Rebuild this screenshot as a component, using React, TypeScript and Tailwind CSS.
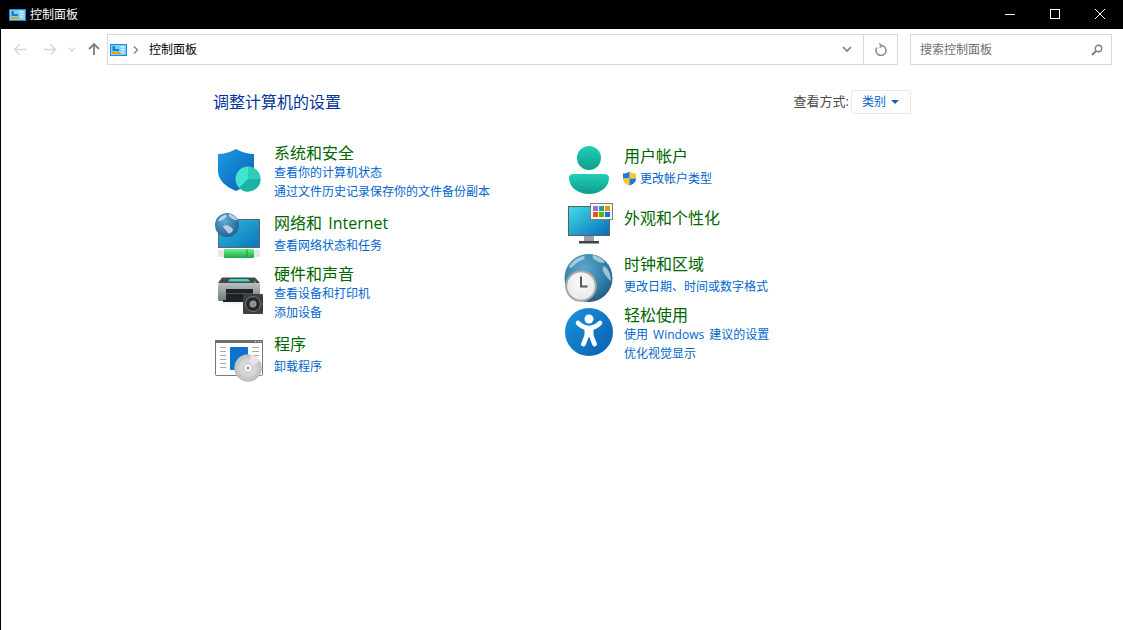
import React from "react";

const CP = () => (
  <svg width="17" height="12" viewBox="0 0 17 12" className="shrink-0">
    <rect x="0.5" y="0.5" width="16" height="11" fill="#7fd0f2" stroke="#1f8ad8" />
    <path d="M2.5 2H5V5H9V7H2.5Z" fill="#1d7fc9" />
    <rect x="2" y="8" width="8" height="2" fill="#f39a18" />
    <path d="M10.5 3h4M11 5.5h3.5M11 8h3" stroke="#ffffff" strokeWidth="1.2" />
  </svg>
);

const ShieldIcon = () => (
  <svg width="50" height="50" viewBox="0 0 50 50" className="shrink-0 mt-[3px]">
    <defs>
      <linearGradient id="sh" x1="0" y1="0" x2="1" y2="1"><stop offset="0" stopColor="#1a9be6" /><stop offset="1" stopColor="#0a5fb0" /></linearGradient>
    </defs>
    <path d="M4 8 C10 8 16 6.5 22 3 C28 6.5 34 8 40 8 L40 25 C40 34 32 41 22 45 C12 41 4 34 4 25 Z" fill="url(#sh)" />
    <circle cx="34" cy="33" r="12.5" fill="#40e4cf" />
    <path d="M34 33 L34 20.5 A12.5 12.5 0 0 1 46.5 33 Z" fill="#30cdb9" />
    <path d="M34 33 L46.5 33 A12.5 12.5 0 0 1 25.1 41.8 Z" fill="#1cb3a2" />
  </svg>
);

const NetworkIcon = () => (
  <svg width="50" height="48" viewBox="0 0 50 48" className="shrink-0 mt-[-2px]">
    <defs>
      <linearGradient id="ns" x1="0" y1="0" x2="1" y2="1"><stop offset="0" stopColor="#2dbcd8" /><stop offset="1" stopColor="#0b74c0" /></linearGradient>
      <linearGradient id="ng" x1="0" y1="0" x2="0" y2="1"><stop offset="0" stopColor="#6cf08a" /><stop offset="1" stopColor="#1ea84a" /></linearGradient>
      <radialGradient id="ng2" cx="0.4" cy="0.35" r="0.75"><stop offset="0" stopColor="#5fa9d2" /><stop offset="1" stopColor="#1a5a8a" /></radialGradient>
    </defs>
    <rect x="4.5" y="8.5" width="41" height="28" fill="url(#ns)" stroke="#5c6670" />
    <rect x="4" y="39" width="42" height="7" fill="#e4e6e8" />
    <rect x="10" y="38" width="30" height="9" rx="1" fill="url(#ng)" />
    <path d="M33 38.5V46.5" stroke="#1c9a44" />
    <circle cx="13" cy="14" r="12" fill="url(#ng2)" />
    <path d="M4 10 C6 6 9 4 12 3.5 C14 5 12 7 10 8 C8 9 6 11 4 10 Z M15 3 C19 3.5 22 6 23.5 9 C21 10 19 8 17 7 C15 6 14 4 15 3 Z M9 15 C12 13 16 15 19 18 C19 21 16 23 14 22 C12 19 10 18 9 15 Z" fill="#dfeaf0" opacity="0.75" />
  </svg>
);

const PrinterIcon = () => (
  <svg width="50" height="40" viewBox="0 0 50 40" className="shrink-0 mt-[13px]">
    <defs>
      <linearGradient id="pr" x1="0" y1="0" x2="0" y2="1"><stop offset="0" stopColor="#b8c0c3" /><stop offset="1" stopColor="#6f777b" /></linearGradient>
    </defs>
    <path d="M8 0.5 H41 L46 6 H4 Z" fill="#44494c" />
    <path d="M16 2 H34 L36 4.5 H14 Z" fill="#45d8c0" />
    <rect x="4" y="6" width="42" height="18" rx="1.5" fill="url(#pr)" />
    <rect x="12" y="12" width="27" height="11" fill="#202326" />
    <rect x="12" y="16" width="27" height="1" fill="#4b5054" />
    <rect x="9" y="23" width="28" height="2" fill="#1f2225" />
    <rect x="9" y="25" width="28" height="2.5" fill="#f4f4f4" />
    <circle cx="41" cy="5" r="0.9" fill="#40d040" />
    <rect x="29" y="17" width="20" height="20" rx="1" fill="#3d3f41" />
    <circle cx="39" cy="27" r="7.5" fill="#25282a" stroke="#7a7d80" />
    <circle cx="39" cy="27" r="3.5" fill="#8d9194" />
  </svg>
);

const ProgramIcon = () => (
  <svg width="50" height="50" viewBox="0 0 50 50" className="shrink-0 mt-px">
    <defs>
      <radialGradient id="cd" cx="0.5" cy="0.5" r="0.6"><stop offset="0" stopColor="#f2f2f2" /><stop offset="0.6" stopColor="#c9cccd" /><stop offset="1" stopColor="#aeb1b3" /></radialGradient>
    </defs>
    <rect x="1.5" y="5.5" width="47" height="35" rx="1" fill="#fdfdfd" stroke="#77797a" />
    <rect x="1" y="5" width="48" height="3" fill="#6d6f70" />
    <path d="M41 6.5h1M43.5 6.5h1M46 6.5h1" stroke="#eee" />
    <path d="M6 12.5h6M6 16.5h6M6 20.5h6M6 24.5h6M6 28.5h6M6 32.5h6M38 12.5h7M38 16.5h7M38 20.5h7" stroke="#a4a6a8" />
    <rect x="16" y="12" width="18" height="23" rx="1" fill="#0a73cf" />
    <circle cx="34" cy="33" r="13.7" fill="url(#cd)" />
    <path d="M34 33 L46 26 A13.7 13.7 0 0 0 37 19.5 Z" fill="#ece2ea" />
    <circle cx="34" cy="33" r="4.5" fill="#f6f6f6" stroke="#b2b4b6" />
    <circle cx="34" cy="33" r="1.5" fill="#9a9c9e" />
  </svg>
);

const PersonIcon = () => (
  <svg width="50" height="49" viewBox="0 0 50 49" className="shrink-0 mt-[-1px]">
    <defs>
      <linearGradient id="pa" x1="0" y1="0" x2="0" y2="1"><stop offset="0" stopColor="#21cfb6" /><stop offset="1" stopColor="#0f9d8c" /></linearGradient>
    </defs>
    <circle cx="25" cy="13" r="12" fill="url(#pa)" />
    <path d="M5 33 Q5 29 10 29 H40 Q45 29 45 33 C45 43 35 49 25 49 C15 49 5 43 5 33 Z" fill="url(#pa)" />
  </svg>
);

const AppearanceIcon = () => (
  <svg width="50" height="44" viewBox="0 0 50 44" className="shrink-0 mt-[-5px]">
    <defs>
      <linearGradient id="ap" x1="0" y1="0" x2="1" y2="1"><stop offset="0" stopColor="#3fe0e8" /><stop offset="1" stopColor="#0a6ab8" /></linearGradient>
    </defs>
    <rect x="4.5" y="3.5" width="41" height="29" fill="url(#ap)" stroke="#55606a" />
    <rect x="20" y="33" width="10" height="5" fill="#9aa2a8" />
    <rect x="15" y="38" width="20" height="2.5" fill="#3f4549" />
    <rect x="26.5" y="0.5" width="22" height="16" fill="#f6f6f6" stroke="#7d7f80" />
    <rect x="29" y="3" width="5" height="5" fill="#9b70d0" />
    <rect x="35" y="3" width="5" height="5" fill="#1fa890" />
    <rect x="41" y="3" width="5" height="5" fill="#f09410" />
    <rect x="29" y="9" width="5" height="5" fill="#e85412" />
    <rect x="35" y="9" width="5" height="5" fill="#62b010" />
    <rect x="41" y="9" width="5" height="5" fill="#0a7ad4" />
  </svg>
);

const ClockIcon = () => (
  <svg width="50" height="50" viewBox="0 0 50 50" className="shrink-0 mt-[-2px]">
    <defs>
      <radialGradient id="gl" cx="0.4" cy="0.3" r="0.85"><stop offset="0" stopColor="#5aa8d0" /><stop offset="0.6" stopColor="#2e7aa4" /><stop offset="1" stopColor="#174f6e" /></radialGradient>
      <radialGradient id="cf" cx="0.5" cy="0.4" r="0.7"><stop offset="0" stopColor="#fbfbfb" /><stop offset="1" stopColor="#e4e4e4" /></radialGradient>
    </defs>
    <circle cx="24.5" cy="26" r="24" fill="url(#gl)" />
    <path d="M5 15 C8 9 14 5 20 4 C22 6 20 8 16 9 C12 11 10 13 7 16 Z M29 3 C34 4 38 6 41 10 C38 12 34 10 31 8 C29 7 28 5 29 3 Z M40 14 C44 16 47 22 47 29 C44 27 41 23 39 19 C38 17 39 15 40 14 Z" fill="#d9e8ee" opacity="0.65" />
    <circle cx="17" cy="34" r="14.8" fill="url(#cf)" stroke="#a6a6a6" strokeWidth="2" />
    <path d="M17 24.5 V34.5 H23.5" fill="none" stroke="#555" strokeWidth="2" />
  </svg>
);

const AccessIcon = () => (
  <svg width="50" height="50" viewBox="0 0 50 50" className="shrink-0 mt-[2px]">
    <defs>
      <linearGradient id="ac" x1="0" y1="0" x2="1" y2="1"><stop offset="0" stopColor="#1a94e0" /><stop offset="1" stopColor="#0a5fae" /></linearGradient>
    </defs>
    <circle cx="25" cy="25" r="24" fill="url(#ac)" />
    <circle cx="25" cy="12" r="4.5" fill="#fff" />
    <path d="M14 16 Q19 21 25 21 Q31 21 36 16" fill="none" stroke="#fff" strokeWidth="4.6" strokeLinecap="round" />
    <path d="M25 21 V28" stroke="#fff" strokeWidth="9" />
    <path d="M23 28 L19.5 37 M27 28 L30.5 37" stroke="#fff" strokeWidth="4.8" strokeLinecap="round" />
  </svg>
);

const UacShield = () => (
  <svg width="15" height="15" viewBox="0 0 15 15" className="shrink-0">
    <path d="M7.5 0.5 C9.5 2 11.5 2.5 14 2.5 V7.5 H7.5 Z" fill="#fbc81e" />
    <path d="M7.5 0.5 C5.5 2 3.5 2.5 1 2.5 V7.5 H7.5 Z" fill="#1b78d4" />
    <path d="M7.5 7.5 V14.5 C4 13.5 1 11 1 7.5 Z" fill="#fbc81e" />
    <path d="M7.5 7.5 H14 V8 C14 11 11 13.5 7.5 14.5 Z" fill="#1b78d4" />
  </svg>
);

const Title = ({ children }: { children: React.ReactNode }) => (
  <a className="block text-[16px] leading-[20px] text-[#006600] [word-spacing:2px]">{children}</a>
);
const Sub = ({ children, className = "" }: { children: React.ReactNode; className?: string }) => (
  <a className={`flex items-center text-[12px] leading-[19px] text-[#0066cc] [word-spacing:2px] ${className}`}>{children}</a>
);

export default function App() {
  return (
    <div
      className="w-[1123px] h-[630px] overflow-hidden bg-white flex flex-col border-l border-black"
      style={{ fontFamily: '"Open Sans","Noto Sans CJK SC",sans-serif' }}
    >
      {/* title bar */}
      <div className="h-[29px] shrink-0 bg-black flex items-center -ml-px pl-[9px] text-white">
        <CP />
        <span className="ml-[4px] text-[12px]">控制面板</span>
        <div className="ml-auto flex h-full">
          <div className="w-[46px] pb-[2px] pl-[4px] flex items-center justify-center">
            <svg width="10" height="10"><path d="M0 5.5H10" stroke="#fff" /></svg>
          </div>
          <div className="w-[46px] pb-[2px] pl-[2px] flex items-center justify-center">
            <svg width="10" height="10"><rect x="0.5" y="0.5" width="9" height="9" fill="none" stroke="#fff" /></svg>
          </div>
          <div className="w-[46px] pb-[2px] flex items-center justify-center">
            <svg width="10" height="10"><path d="M0 0L10 10M10 0L0 10" stroke="#fff" /></svg>
          </div>
        </div>
      </div>

      {/* toolbar */}
      <div className="h-[31px] mt-[5px] shrink-0 flex items-center">
        <div className="w-[106px] h-full flex items-center shrink-0">
          <svg width="106" height="31" viewBox="0 0 106 31" fill="none">
            <path d="M14 15.5H25M18.5 10.5L13.5 15.5L18.5 20.5" stroke="#d6d6d6" strokeWidth="1.4" />
            <path d="M43 15.5H54M49.5 10.5L54.5 15.5L49.5 20.5" stroke="#d6d6d6" strokeWidth="1.4" />
            <path d="M68 14L71 17L74 14" stroke="#d6d6d6" strokeWidth="1.4" />
            <path d="M93 21V10M88 15L93 10L98 15" stroke="#7f7f7f" strokeWidth="1.8" />
          </svg>
        </div>
        <div className="w-[791px] h-full border border-[#d9d9d9] flex items-center shrink-0">
          <div className="ml-[2px]"><CP /></div>
          <svg width="6" height="8" viewBox="0 0 6 8" className="ml-[6px]" fill="none"><path d="M1 0.5L4.5 4L1 7.5" stroke="#7f7f7f" strokeWidth="1.3" /></svg>
          <span className="ml-[10px] text-[12px] text-black">控制面板</span>
          <div className="ml-auto h-full flex items-center">
            <svg width="10" height="7" viewBox="0 0 10 7" className="mr-[11px]" fill="none"><path d="M1 1L5 5L9 1" stroke="#7f7f7f" strokeWidth="1.6" /></svg>
            <div className="w-[34px] h-full border-l border-[#d9d9d9] flex items-center justify-center">
              <svg width="12" height="13" viewBox="0 0 12 13" fill="none"><path d="M2 4.5A5 5 0 1 0 6.5 2.5M4.2 0.6L6.8 2.5L4.6 4.6" stroke="#8a8a8a" strokeWidth="1.5" /></svg>
            </div>
          </div>
        </div>
        <div className="w-[202px] h-full ml-[12px] border border-[#d9d9d9] flex items-center pl-[9px] pr-[8px] shrink-0">
          <span className="text-[12px] text-[#6d6d6d]">搜索控制面板</span>
          <svg width="12" height="12" viewBox="0 0 12 12" className="ml-auto" fill="none"><circle cx="7.5" cy="4.5" r="3.2" stroke="#7f7f7f" strokeWidth="1.4" /><path d="M5 7L1 11" stroke="#7f7f7f" strokeWidth="2" /></svg>
        </div>
      </div>

      {/* content */}
      <div className="pl-[212px] pt-[25px]">
        <div className="w-[698px] h-[24px] flex items-center">
          <h1 className="text-[16px] text-[#003399] font-normal">调整计算机的设置</h1>
          <div className="ml-auto flex items-center">
            <span className="text-[13px] text-[#4a4a4a]">查看方式:</span>
            <div className="ml-[2px] w-[60px] h-[24px] border border-[#e8e8e8] rounded-[3px] flex items-center pl-[10px]">
              <span className="text-[12px] text-[#0066cc]">类别</span>
              <svg width="8" height="4" viewBox="0 0 8 4" className="ml-[5px]"><path d="M0 0H8L4 4Z" fill="#0066cc" /></svg>
            </div>
          </div>
        </div>

        <div className="flex mt-[29px] pl-px">
          {/* left */}
          <div className="w-[350px] flex flex-col shrink-0">
            <div className="flex">
              <ShieldIcon />
              <div className="ml-[10px]">
                <Title>系统和安全</Title>
                <Sub>查看你的计算机状态</Sub>
                <Sub>通过文件历史记录保存你的文件备份副本</Sub>
              </div>
            </div>
            <div className="flex mt-[12px]">
              <NetworkIcon />
              <div className="ml-[10px]">
                <Title>网络和 Internet</Title>
                <Sub className="mt-[3px]">查看网络状态和任务</Sub>
              </div>
            </div>
            <div className="flex mt-[5px]">
              <PrinterIcon />
              <div className="ml-[10px]">
                <Title>硬件和声音</Title>
                <Sub>查看设备和打印机</Sub>
                <Sub>添加设备</Sub>
              </div>
            </div>
            <div className="flex mt-[12px]">
              <ProgramIcon />
              <div className="ml-[10px]">
                <Title>程序</Title>
                <Sub className="mt-[3px]">卸载程序</Sub>
              </div>
            </div>
          </div>
          {/* right */}
          <div className="flex flex-col mt-[3px]">
            <div className="flex">
              <PersonIcon />
              <div className="ml-[10px]">
                <Title>用户帐户</Title>
                <Sub className="mt-[3px] -ml-[2px]"><UacShield /><span className="ml-[3px]">更改帐户类型</span></Sub>
              </div>
            </div>
            <div className="flex mt-[14px]">
              <AppearanceIcon />
              <div className="ml-[10px]"><Title>外观和个性化</Title></div>
            </div>
            <div className="flex mt-[7px]">
              <ClockIcon />
              <div className="ml-[10px]">
                <Title>时钟和区域</Title>
                <Sub className="mt-[3px]">更改日期、时间或数字格式</Sub>
              </div>
            </div>
            <div className="flex mt-[3px]">
              <AccessIcon />
              <div className="ml-[10px]">
                <Title>轻松使用</Title>
                <Sub>使用 Windows 建议的设置</Sub>
                <Sub>优化视觉显示</Sub>
              </div>
            </div>
          </div>
        </div>
      </div>
    </div>
  );
}
